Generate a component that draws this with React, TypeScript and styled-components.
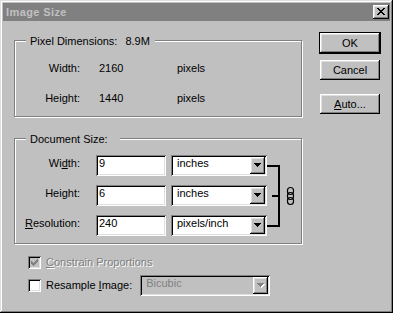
import React from "react";
import styled, { createGlobalStyle, css } from "styled-components";

const GlobalStyle = createGlobalStyle`
  html, body { margin: 0; padding: 0; background: #c0c0c0; }
  body {
    font-family: "Liberation Sans", Arial, sans-serif;
    font-size: 11px;
    line-height: 13px;
    color: #000;
  }
  u { text-decoration: underline; text-underline-offset: 1px; }
`;

const raised = css`
  box-shadow: inset -1px -1px 0 #000, inset 1px 1px 0 #fff,
    inset -2px -2px 0 #808080, inset 2px 2px 0 #dfdfdf;
`;

const sunken = css`
  box-shadow: inset 1px 1px 0 #808080, inset -1px -1px 0 #fff,
    inset 2px 2px 0 #000, inset -2px -2px 0 #dfdfdf;
`;

const disabledText = css`
  color: #808080;
  text-shadow: 1px 1px 0 #fff;
`;

const Window = styled.div`
  width: 393px;
  height: 313px;
  box-sizing: border-box;
  padding: 3px;
  background: #c0c0c0;
  box-shadow: inset -1px -1px 0 #000, inset 1px 1px 0 #dfdfdf,
    inset -2px -2px 0 #808080, inset 2px 2px 0 #fff;
  display: flex;
  flex-direction: column;
`;

const TitleBar = styled.div`
  height: 18px;
  background: #808080;
  display: flex;
  align-items: center;
  justify-content: space-between;
  padding: 0 1px 0 3px;
`;

const Title = styled.span`
  font-weight: bold;
  color: #c0c0c0;
  letter-spacing: 0.4px;
`;

const CloseButton = styled.div`
  width: 16px;
  height: 14px;
  box-sizing: border-box;
  background: #c0c0c0;
  ${raised};
  display: flex;
  align-items: center;
  justify-content: center;
  padding-bottom: 1px;
`;

const Body = styled.div`
  display: flex;
  flex-direction: column;
  padding: 12px 0 0 11px;
`;

const Main = styled.div`
  display: flex;
  align-items: flex-start;
`;

const Groups = styled.div`
  display: flex;
  flex-direction: column;
  width: 289px;
  margin-top: 7px;
`;

const Group = styled.div<{ $height: number; $top: number; $padTop: number }>`
  position: relative;
  box-sizing: border-box;
  width: 288px;
  height: ${(p) => p.$height}px;
  margin-top: ${(p) => p.$top}px;
  padding-top: ${(p) => p.$padTop}px;
  border: 1px solid #808080;
  box-shadow: inset 1px 1px 0 #fff, 1px 1px 0 #fff;
`;

const Legend = styled.span<{ $padRight: number }>`
  position: absolute;
  top: -6px;
  left: 11px;
  background: #c0c0c0;
  padding: 0 ${(p) => p.$padRight}px 0 4px;
  white-space: nowrap;
`;

const LegendValue = styled.span`
  margin-left: 8px;
`;

const InfoRow = styled.div`
  display: flex;
  height: 13px;
  & + & { margin-top: 17px; }
`;

const Label = styled.span`
  width: 65px;
  text-align: right;
  white-space: nowrap;
`;

const InfoValue = styled.span`
  margin-left: 19px;
  width: 78px;
`;

const DocBody = styled.div`
  display: flex;
  align-items: flex-start;
`;

const FieldRows = styled.div`
  display: flex;
  flex-direction: column;
  gap: 9px;
`;

const FieldRow = styled.div`
  display: flex;
  align-items: flex-start;
  height: 21px;
`;

const FieldLabel = styled(Label)`
  margin-top: 2px;
`;

const TextField = styled.div`
  margin-left: 16px;
  width: 70px;
  height: 21px;
  box-sizing: border-box;
  padding: 2px 3px 0;
  background: #fff;
  ${sunken};
`;

const Select = styled.div<{ $width: number; $disabled?: boolean }>`
  width: ${(p) => p.$width}px;
  height: 21px;
  box-sizing: border-box;
  background: ${(p) => (p.$disabled ? "#c0c0c0" : "#fff")};
  color: ${(p) => (p.$disabled ? "#808080" : "#000")};
  ${sunken};
  display: flex;
  align-items: flex-start;
  padding: 2px 2px 2px 6px;
`;

const SelectText = styled.span`
  flex: 1;
`;

const ArrowButton = styled.div`
  width: 15px;
  height: 17px;
  box-sizing: border-box;
  background: #c0c0c0;
  ${raised};
  display: flex;
  align-items: center;
  justify-content: center;
`;

const UnitSelect = styled(Select)`
  margin-left: 5px;
`;

const Buttons = styled.div`
  display: flex;
  flex-direction: column;
  margin-left: 17px;
`;

const Button = styled.div<{ $default?: boolean; $gap: number }>`
  width: 60px;
  height: 20px;
  box-sizing: border-box;
  margin-top: ${(p) => p.$gap}px;
  background: #c0c0c0;
  ${raised};
  display: flex;
  align-items: center;
  justify-content: center;
  ${(p) => p.$default && "outline: 1px solid #000;"}
`;

const Options = styled.div`
  display: flex;
  flex-direction: column;
  margin-top: 12px;
  padding-left: 14px;
`;

const OptionRow = styled.div<{ $height: number; $top: number }>`
  display: flex;
  align-items: center;
  height: ${(p) => p.$height}px;
  margin-top: ${(p) => p.$top}px;
`;

const CheckBox = styled.div<{ $disabled?: boolean }>`
  width: 13px;
  height: 13px;
  box-sizing: border-box;
  background: ${(p) => (p.$disabled ? "#c0c0c0" : "#fff")};
  ${sunken};
  display: flex;
  align-items: center;
  justify-content: center;
`;

const OptionText = styled.span<{ $disabled?: boolean }>`
  margin-left: 5px;
  ${(p) => p.$disabled && disabledText};
`;

const ResampleText = styled(OptionText)`
  margin-right: 8px;
`;

function pixelPath(rows: string[]): string {
  let d = "";
  rows.forEach((row, y) => {
    row.split("").forEach((c, x) => {
      if (c === "#") d += `M${x} ${y}h1v1h-1z`;
    });
  });
  return d;
}

const closeX = pixelPath([
  "##....##",
  ".##..##.",
  "..####..",
  "...##...",
  "..####..",
  ".##..##.",
  "##....##",
]);

const check = pixelPath([
  "......#",
  ".....##",
  "#...###",
  "##.###.",
  "#####..",
  ".###...",
  "..#....",
]);

const arrow = pixelPath(["#######", ".#####.", "..###..", "...#..."]);

const CloseIcon = () => (
  <svg width="8" height="7" viewBox="0 0 8 7" shapeRendering="crispEdges">
    <path d={closeX} fill="#000" />
  </svg>
);

const CheckIcon = ({ color }: { color: string }) => (
  <svg width="7" height="7" viewBox="0 0 7 7" shapeRendering="crispEdges">
    <path d={check} fill={color} />
  </svg>
);

const ArrowIcon = ({ disabled }: { disabled?: boolean }) => (
  <svg width="8" height="5" viewBox="0 0 8 5" shapeRendering="crispEdges">
    {disabled && <path d={arrow} fill="#fff" transform="translate(1 1)" />}
    <path d={arrow} fill={disabled ? "#808080" : "#000"} />
  </svg>
);

const LinkBracket = () => (
  <svg width="30" height="81" viewBox="0 0 30 81" shapeRendering="crispEdges">
    <rect x="0" y="10" width="13" height="2" fill="#000" />
    <rect x="5" y="40" width="8" height="2" fill="#000" />
    <rect x="0" y="70" width="13" height="2" fill="#000" />
    <rect x="11" y="10" width="2" height="62" fill="#000" />
    <g fill="none" stroke="#000" strokeWidth="1.2" shapeRendering="auto">
      <rect x="20.5" y="32.5" width="6" height="7" rx="3" />
      <rect x="20.5" y="37.5" width="6" height="7" rx="3" />
      <rect x="20.5" y="42.5" width="6" height="7" rx="3" />
    </g>
  </svg>
);

export default function App() {
  return (
    <>
      <GlobalStyle />
      <Window>
        <TitleBar>
          <Title>Image Size</Title>
          <CloseButton>
            <CloseIcon />
          </CloseButton>
        </TitleBar>
        <Body>
          <Main>
            <Groups>
              <Group $height={77} $top={0} $padTop={21}>
                <Legend $padRight={5}>
                  Pixel Dimensions:<LegendValue>8.9M</LegendValue>
                </Legend>
                <InfoRow>
                  <Label>Width:</Label>
                  <InfoValue>2160</InfoValue>
                  <span>pixels</span>
                </InfoRow>
                <InfoRow>
                  <Label>Height:</Label>
                  <InfoValue>1440</InfoValue>
                  <span>pixels</span>
                </InfoRow>
              </Group>
              <Group $height={106} $top={21} $padTop={16}>
                <Legend $padRight={12}>Document Size:</Legend>
                <DocBody>
                  <FieldRows>
                    <FieldRow>
                      <FieldLabel>
                        Wi<u>d</u>th:
                      </FieldLabel>
                      <TextField>9</TextField>
                      <UnitSelect $width={96}>
                        <SelectText>inches</SelectText>
                        <ArrowButton>
                          <ArrowIcon />
                        </ArrowButton>
                      </UnitSelect>
                    </FieldRow>
                    <FieldRow>
                      <FieldLabel>
                        Hei<u>g</u>ht:
                      </FieldLabel>
                      <TextField>6</TextField>
                      <UnitSelect $width={96}>
                        <SelectText>inches</SelectText>
                        <ArrowButton>
                          <ArrowIcon />
                        </ArrowButton>
                      </UnitSelect>
                    </FieldRow>
                    <FieldRow>
                      <FieldLabel>
                        <u>R</u>esolution:
                      </FieldLabel>
                      <TextField>240</TextField>
                      <UnitSelect $width={96}>
                        <SelectText>pixels/inch</SelectText>
                        <ArrowButton>
                          <ArrowIcon />
                        </ArrowButton>
                      </UnitSelect>
                    </FieldRow>
                  </FieldRows>
                  <LinkBracket />
                </DocBody>
              </Group>
            </Groups>
            <Buttons>
              <Button $default $gap={0}>OK</Button>
              <Button $gap={7}>Cancel</Button>
              <Button $gap={14}>
                <span>
                  <u>A</u>uto...
                </span>
              </Button>
            </Buttons>
          </Main>
          <Options>
            <OptionRow $height={13} $top={0}>
              <CheckBox $disabled>
                <CheckIcon color="#808080" />
              </CheckBox>
              <OptionText $disabled>
                <u>C</u>onstrain Proportions
              </OptionText>
            </OptionRow>
            <OptionRow $height={21} $top={6}>
              <CheckBox />
              <ResampleText>
                Resample <u>I</u>mage:
              </ResampleText>
              <Select $width={130} $disabled>
                <SelectText>Bicubic</SelectText>
                <ArrowButton>
                  <ArrowIcon disabled />
                </ArrowButton>
              </Select>
            </OptionRow>
          </Options>
        </Body>
      </Window>
    </>
  );
}
